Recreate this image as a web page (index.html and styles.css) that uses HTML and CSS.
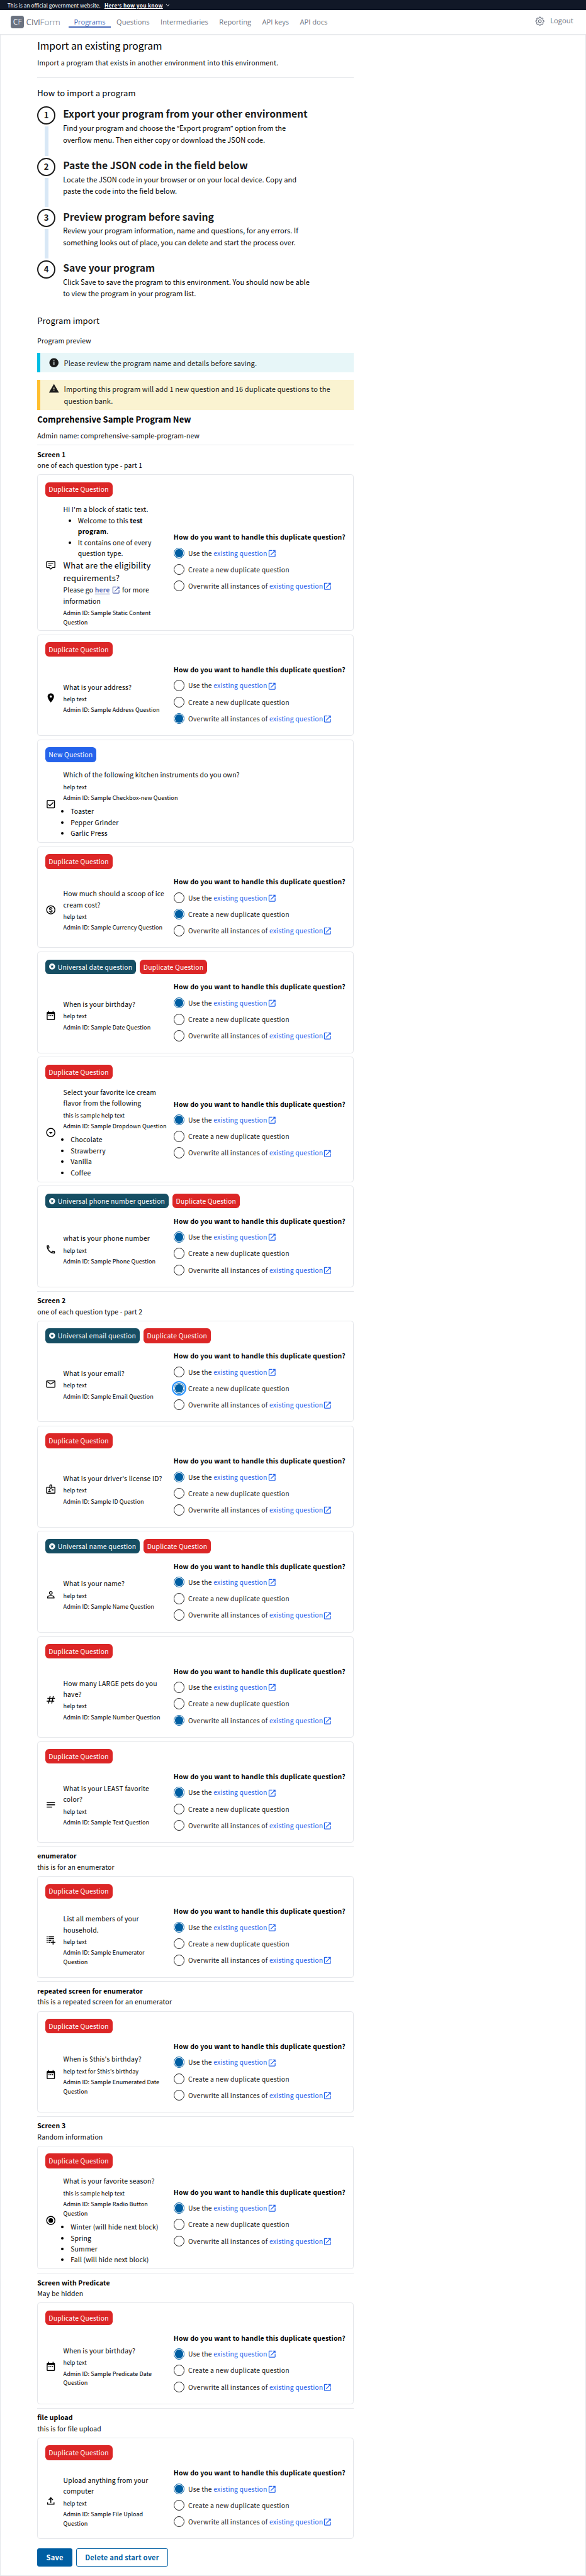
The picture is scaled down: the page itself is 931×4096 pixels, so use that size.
FILE: index.html
```html
<!DOCTYPE html>
<html lang="en">
<head>
<meta charset="utf-8">
<title>Import an existing program</title>
<link rel="stylesheet" href="styles.css">
</head>
<body>
<svg class="defs" aria-hidden="true">
  <symbol id="i-open" viewBox="0 0 24 24"><path d="M19 19H5V5h7V3H5c-1.11 0-2 .9-2 2v14c0 1.1.89 2 2 2h14c1.1 0 2-.9 2-2v-7h-2v7zM14 3v2h3.59l-9.83 9.83 1.41 1.41L19 6.41V10h2V3h-7z"/></symbol>
  <symbol id="i-static" viewBox="0 0 24 24"><path d="M4 4h16a1 1 0 0 1 1 1v11a1 1 0 0 1-1 1h-4.500L12 20.300 8.500 17H4a1 1 0 0 1-1-1V5a1 1 0 0 1 1-1z" fill="none" stroke="currentColor" stroke-width="2"/><path d="M6.200 8.200h11M6.200 12.200h7" fill="none" stroke="currentColor" stroke-width="1.600"/></symbol>
  <symbol id="i-address" viewBox="0 0 24 24"><path d="M12 2C8.130 2 5 5.130 5 9c0 5.250 7 13 7 13s7-7.750 7-13c0-3.870-3.130-7-7-7zm0 9.500c-1.380 0-2.500-1.120-2.500-2.500s1.120-2.500 2.500-2.500 2.500 1.120 2.500 2.500-1.120 2.500-2.500 2.500z"/></symbol>
  <symbol id="i-checkbox" viewBox="0 0 24 24"><path d="M19 3H5c-1.100 0-2 .9-2 2v14c0 1.100.9 2 2 2h14c1.100 0 2-.9 2-2V5c0-1.100-.9-2-2-2zm0 16H5V5h14v14zM17.990 9l-1.410-1.420-6.590 6.590-2.580-2.570-1.420 1.410 4 3.990z"/></symbol>
  <symbol id="i-currency" viewBox="0 0 24 24"><circle cx="12" cy="12" r="9" fill="none" stroke="currentColor" stroke-width="2"/><path d="M15 9.200C14.600 8.200 13.500 7.500 12 7.500c-1.700 0-2.900.8-2.900 2.100 0 3 5.900 1.600 5.900 4.700 0 1.300-1.200 2.200-3 2.200-1.700 0-2.900-.8-3.200-2.100M12 5.500v2M12 16.500v2" fill="none" stroke="currentColor" stroke-width="1.900"/></symbol>
  <symbol id="i-date" viewBox="0 0 24 24"><path d="M9 11H7v2h2v-2zm4 0h-2v2h2v-2zm4 0h-2v2h2v-2zm2-7h-1V2h-2v2H8V2H6v2H5c-1.110 0-1.990.9-1.990 2L3 20c0 1.100.89 2 2 2h14c1.100 0 2-.9 2-2V6c0-1.100-.9-2-2-2zm0 16H5V9h14v11z"/></symbol>
  <symbol id="i-dropdown" viewBox="0 0 24 24"><path d="M12 4c4.410 0 8 3.590 8 8s-3.590 8-8 8-8-3.590-8-8 3.590-8 8-8m0-2C6.480 2 2 6.480 2 12s4.480 10 10 10 10-4.480 10-10S17.520 2 12 2zm0 13l-4-4h8z"/></symbol>
  <symbol id="i-phone" viewBox="0 0 24 24"><path d="M6.540 5c.06.89.21 1.760.45 2.590l-1.200 1.200c-.41-1.200-.67-2.470-.76-3.790h1.510m9.860 12.020c.85.24 1.720.39 2.600.45v1.490c-1.320-.09-2.590-.35-3.800-.75l1.200-1.190M7.500 3H4c-.55 0-1 .45-1 1 0 9.390 7.610 17 17 17 .55 0 1-.45 1-1v-3.490c0-.55-.45-1-1-1-1.240 0-2.450-.2-3.570-.57-.1-.04-.21-.05-.31-.05-.26 0-.51.1-.71.29l-2.200 2.200c-2.830-1.450-5.150-3.760-6.590-6.590l2.200-2.200c.28-.28.36-.67.25-1.020C8.700 6.450 8.500 5.250 8.500 4c0-.55-.45-1-1-1z"/></symbol>
  <symbol id="i-email" viewBox="0 0 24 24"><path d="M22 6c0-1.100-.9-2-2-2H4c-1.100 0-2 .9-2 2v12c0 1.100.9 2 2 2h16c1.100 0 2-.9 2-2V6zm-2 0l-8 5-8-5h16zm0 12H4V8l8 5 8-5v10z"/></symbol>
  <symbol id="i-id" viewBox="0 0 24 24"><path d="M20 7h-5V4c0-1.100-.9-2-2-2h-2c-1.100 0-2 .9-2 2v3H4c-1.100 0-2 .9-2 2v11c0 1.100.9 2 2 2h16c1.100 0 2-.9 2-2V9c0-1.100-.9-2-2-2zm-9-3h2v5h-2V4zm9 16H4V9h5c0 1.100.9 2 2 2h2c1.100 0 2-.9 2-2h5v11z"/><circle cx="9" cy="13.500" r="1.500"/><path d="M11.080 16.180C10.440 15.900 9.740 15.750 9 15.750s-1.440.15-2.080.43C6.360 16.420 6 16.960 6 17.570V18h6v-.43c0-.61-.36-1.150-.92-1.390zM14 12h4v1.500h-4zM14 15h4v1.500h-4z"/></symbol>
  <symbol id="i-name" viewBox="0 0 24 24"><path d="M12 5.900c1.160 0 2.100.94 2.100 2.100s-.94 2.100-2.100 2.100S9.900 9.160 9.900 8s.94-2.100 2.100-2.100m0 9c2.970 0 6.100 1.460 6.100 2.100v1.100H5.900V17c0-.64 3.130-2.100 6.100-2.100M12 4C9.790 4 8 5.790 8 8s1.790 4 4 4 4-1.790 4-4-1.790-4-4-4zm0 9c-2.670 0-8 1.340-8 4v3h16v-3c0-2.660-5.330-4-8-4z"/></symbol>
  <symbol id="i-number" viewBox="0 0 24 24"><path d="M10.500 4L7 20M17.500 4L14 20M4.500 9H21M3 15h16.500" fill="none" stroke="currentColor" stroke-width="2"/></symbol>
  <symbol id="i-text" viewBox="0 0 24 24"><path d="M3 6h18v2H3zM3 11h18v2H3zM3 16h12v2H3z"/></symbol>
  <symbol id="i-enum" viewBox="0 0 24 24"><path d="M3 4h2v2H3zM7 4h12v2H7zM3 8h2v2H3zM7 8h12v2H7zM3 12h2v2H3zM7 12h6v2H7zM3 16h2v2H3zM7 16h4v2H7zM16 12h2v4h4v2h-4v4h-2v-4h-4v-2h4z"/></symbol>
  <symbol id="i-radio" viewBox="0 0 24 24"><circle cx="12" cy="12" r="9" fill="none" stroke="currentColor" stroke-width="2"/><circle cx="12" cy="12" r="5"/></symbol>
  <symbol id="i-upload" viewBox="0 0 24 24"><path d="M5 15v4h14v-4M12 16V5.500M7.500 9.500L12 5l4.500 4.500" fill="none" stroke="currentColor" stroke-width="2"/></symbol>
  <symbol id="i-star" viewBox="0 0 24 24"><path fill-rule="evenodd" d="M12 2a10 10 0 1 0 0 20 10 10 0 0 0 0-20zm3.700 15L12 14.300 8.300 17l1.400-4.400L6 10h4.500L12 5.500l1.500 4.500H18l-3.700 2.600z"/></symbol>
  <symbol id="i-info" viewBox="0 0 24 24"><path d="M12 2C6.480 2 2 6.480 2 12s4.480 10 10 10 10-4.480 10-10S17.520 2 12 2zm1 15h-2v-6h2v6zm0-8h-2V7h2v2z"/></symbol>
  <symbol id="i-warn" viewBox="0 0 24 24"><path d="M1 21h22L12 2 1 21zm12-3h-2v-2h2v2zm0-4h-2v-4h2v4z"/></symbol>
  <symbol id="i-gear" viewBox="0 0 24 24"><path d="M10.300 4.300c.4-1.760 2.900-1.760 3.400 0a1.720 1.720 0 0 0 2.570 1.070c1.540-.94 3.300.82 2.370 2.370a1.720 1.720 0 0 0 1.060 2.570c1.760.43 1.760 2.930 0 3.360a1.720 1.720 0 0 0-1.060 2.570c.94 1.540-.83 3.300-2.370 2.370a1.720 1.720 0 0 0-2.570 1.060c-.43 1.760-2.930 1.760-3.360 0a1.720 1.720 0 0 0-2.570-1.060c-1.540.94-3.300-.83-2.370-2.370a1.720 1.720 0 0 0-1.060-2.570c-1.760-.43-1.760-2.930 0-3.360a1.720 1.720 0 0 0 1.060-2.570c-.94-1.540.83-3.300 2.370-2.370 1 .6 2.300.07 2.570-1.060z" fill="none" stroke="currentColor" stroke-width="1.600"/><circle cx="12" cy="12" r="3" fill="none" stroke="currentColor" stroke-width="1.600"/></symbol>
  <symbol id="i-chev" viewBox="0 0 12 12"><path d="M2.500 4l3.500 3.500L9.500 4" fill="none" stroke="currentColor" stroke-width="1.300"/></symbol>
</svg>

<div class="gov"><span class="gov-text">This is an official government website.</span><a class="gov-link">Here's how you know</a><svg class="chev"><use href="#i-chev"/></svg></div>

<header class="header">
  <div class="logo"><span class="mark">C<i>F</i></span><span class="word">Civi<i>Form</i></span></div>
  <nav class="nav">
    <a class="nav-item active">Programs</a><a class="nav-item">Questions</a><a class="nav-item">Intermediaries</a><a class="nav-item">Reporting</a><a class="nav-item">API keys</a><a class="nav-item">API docs</a>
  </nav>
  <div class="account"><svg class="gear"><use href="#i-gear"/></svg><span>Logout</span></div>
</header>

<main class="main">
  <div class="column">
    <h1 class="title">Import an existing program</h1>
    <p class="lead">Import a program that exists in another environment into this environment.</p>
    <hr class="rule">
    <h2 class="sub">How to import a program</h2>

    <ol class="steps">
      <li class="step"><div class="rail"><span class="num">1</span><span class="bar"></span></div><div class="step-body"><h3>Export your program from your other environment</h3><p>Find your program and choose the <span class="quote">“</span>Export program<span class="quote">”</span> option from the<br>overflow menu. Then either copy or download the JSON code.</p></div></li>
      <li class="step"><div class="rail"><span class="num">2</span><span class="bar"></span></div><div class="step-body"><h3>Paste the JSON code in the field below</h3><p>Locate the JSON code in your browser or on your local device. Copy and<br>paste the code into the field below.</p></div></li>
      <li class="step"><div class="rail"><span class="num">3</span><span class="bar"></span></div><div class="step-body"><h3>Preview program before saving</h3><p>Review your program information, name and questions, for any errors. If<br>something looks out of place, you can delete and start the process over.</p></div></li>
      <li class="step"><div class="rail"><span class="num">4</span></div><div class="step-body"><h3>Save your program</h3><p>Click Save to save the program to this environment. You should now be able<br>to view the program in your program list.</p></div></li>
    </ol>

    <h2 class="sub import">Program import</h2>
    <p class="preview">Program preview</p>

    <div class="alert info"><svg class="alert-icon"><use href="#i-info"/></svg><p>Please review the program name and details before saving.</p></div>
    <div class="alert warning"><svg class="alert-icon"><use href="#i-warn"/></svg><p>Importing this program will add 1 new question and 16 duplicate questions to the<br>question bank.</p></div>

    <h3 class="program">Comprehensive Sample Program New</h3>
    <p class="admin-name">Admin name: comprehensive-sample-program-new</p>

    <section class="block">
      <h4>Screen 1</h4><p class="desc">one of each question type - part 1</p>

      <article class="card">
        <div class="badges"><span class="badge dup">Duplicate Question</span></div>
        <div class="row"><svg class="icon"><use href="#i-static"/></svg>
          <div class="q"><p>Hi I'm a block of static text.</p><ul class="inner"><li>Welcome to this <b>test<br>program</b>.</li><li>It contains one of every<br>question type.</li></ul><p class="big">What are the eligibility<br>requirements?</p><p>Please go <a class="here">here</a> <svg class="open here-icon"><use href="#i-open"/></svg> for more<br>information</p><p class="small">Admin ID: Sample Static Content<br>Question</p></div>
          <div class="choices"><p class="ask">How do you want to handle this duplicate question?</p><div class="opt"><span class="radio on"></span><span>Use the <a>existing question</a></span><svg class="open"><use href="#i-open"/></svg></div><div class="opt"><span class="radio"></span><span>Create a new duplicate question</span></div><div class="opt"><span class="radio"></span><span>Overwrite all instances of <a>existing question</a></span><svg class="open"><use href="#i-open"/></svg></div></div>
        </div>
      </article>

      <article class="card">
        <div class="badges"><span class="badge dup">Duplicate Question</span></div>
        <div class="row"><svg class="icon"><use href="#i-address"/></svg>
          <div class="q"><p>What is your address?</p><p class="small">help text</p><p class="small">Admin ID: Sample Address Question</p></div>
          <div class="choices"><p class="ask">How do you want to handle this duplicate question?</p><div class="opt"><span class="radio"></span><span>Use the <a>existing question</a></span><svg class="open"><use href="#i-open"/></svg></div><div class="opt"><span class="radio"></span><span>Create a new duplicate question</span></div><div class="opt"><span class="radio on"></span><span>Overwrite all instances of <a>existing question</a></span><svg class="open"><use href="#i-open"/></svg></div></div>
        </div>
      </article>

      <article class="card">
        <div class="badges"><span class="badge new">New Question</span></div>
        <div class="row"><svg class="icon"><use href="#i-checkbox"/></svg>
          <div class="q"><p>Which of the following kitchen instruments do you own?</p><p class="small">help text</p><p class="small">Admin ID: Sample Checkbox-new Question</p><ul class="options"><li>Toaster</li><li>Pepper Grinder</li><li>Garlic Press</li></ul></div>
        </div>
      </article>

      <article class="card">
        <div class="badges"><span class="badge dup">Duplicate Question</span></div>
        <div class="row"><svg class="icon"><use href="#i-currency"/></svg>
          <div class="q"><p>How much should a scoop of ice<br>cream cost?</p><p class="small">help text</p><p class="small">Admin ID: Sample Currency Question</p></div>
          <div class="choices"><p class="ask">How do you want to handle this duplicate question?</p><div class="opt"><span class="radio"></span><span>Use the <a>existing question</a></span><svg class="open"><use href="#i-open"/></svg></div><div class="opt"><span class="radio on"></span><span>Create a new duplicate question</span></div><div class="opt"><span class="radio"></span><span>Overwrite all instances of <a>existing question</a></span><svg class="open"><use href="#i-open"/></svg></div></div>
        </div>
      </article>

      <article class="card">
        <div class="badges"><span class="badge uni"><svg class="star"><use href="#i-star"/></svg>Universal date question</span><span class="badge dup">Duplicate Question</span></div>
        <div class="row"><svg class="icon"><use href="#i-date"/></svg>
          <div class="q"><p>When is your birthday?</p><p class="small">help text</p><p class="small">Admin ID: Sample Date Question</p></div>
          <div class="choices"><p class="ask">How do you want to handle this duplicate question?</p><div class="opt"><span class="radio on"></span><span>Use the <a>existing question</a></span><svg class="open"><use href="#i-open"/></svg></div><div class="opt"><span class="radio"></span><span>Create a new duplicate question</span></div><div class="opt"><span class="radio"></span><span>Overwrite all instances of <a>existing question</a></span><svg class="open"><use href="#i-open"/></svg></div></div>
        </div>
      </article>

      <article class="card">
        <div class="badges"><span class="badge dup">Duplicate Question</span></div>
        <div class="row"><svg class="icon"><use href="#i-dropdown"/></svg>
          <div class="q"><p>Select your favorite ice cream<br>flavor from the following</p><p class="small">this is sample help text</p><p class="small">Admin ID: Sample Dropdown Question</p><ul class="options"><li>Chocolate</li><li>Strawberry</li><li>Vanilla</li><li>Coffee</li></ul></div>
          <div class="choices"><p class="ask">How do you want to handle this duplicate question?</p><div class="opt"><span class="radio on"></span><span>Use the <a>existing question</a></span><svg class="open"><use href="#i-open"/></svg></div><div class="opt"><span class="radio"></span><span>Create a new duplicate question</span></div><div class="opt"><span class="radio"></span><span>Overwrite all instances of <a>existing question</a></span><svg class="open"><use href="#i-open"/></svg></div></div>
        </div>
      </article>

      <article class="card">
        <div class="badges"><span class="badge uni"><svg class="star"><use href="#i-star"/></svg>Universal phone number question</span><span class="badge dup">Duplicate Question</span></div>
        <div class="row"><svg class="icon"><use href="#i-phone"/></svg>
          <div class="q"><p>what is your phone number</p><p class="small">help text</p><p class="small">Admin ID: Sample Phone Question</p></div>
          <div class="choices"><p class="ask">How do you want to handle this duplicate question?</p><div class="opt"><span class="radio on"></span><span>Use the <a>existing question</a></span><svg class="open"><use href="#i-open"/></svg></div><div class="opt"><span class="radio"></span><span>Create a new duplicate question</span></div><div class="opt"><span class="radio"></span><span>Overwrite all instances of <a>existing question</a></span><svg class="open"><use href="#i-open"/></svg></div></div>
        </div>
      </article>
    </section>

    <section class="block">
      <h4>Screen 2</h4><p class="desc">one of each question type - part 2</p>

      <article class="card">
        <div class="badges"><span class="badge uni"><svg class="star"><use href="#i-star"/></svg>Universal email question</span><span class="badge dup">Duplicate Question</span></div>
        <div class="row"><svg class="icon"><use href="#i-email"/></svg>
          <div class="q"><p>What is your email?</p><p class="small">help text</p><p class="small">Admin ID: Sample Email Question</p></div>
          <div class="choices"><p class="ask">How do you want to handle this duplicate question?</p><div class="opt"><span class="radio"></span><span>Use the <a>existing question</a></span><svg class="open"><use href="#i-open"/></svg></div><div class="opt"><span class="radio on focus"></span><span>Create a new duplicate question</span></div><div class="opt"><span class="radio"></span><span>Overwrite all instances of <a>existing question</a></span><svg class="open"><use href="#i-open"/></svg></div></div>
        </div>
      </article>

      <article class="card">
        <div class="badges"><span class="badge dup">Duplicate Question</span></div>
        <div class="row"><svg class="icon"><use href="#i-id"/></svg>
          <div class="q"><p>What is your driver's license ID?</p><p class="small">help text</p><p class="small">Admin ID: Sample ID Question</p></div>
          <div class="choices"><p class="ask">How do you want to handle this duplicate question?</p><div class="opt"><span class="radio on"></span><span>Use the <a>existing question</a></span><svg class="open"><use href="#i-open"/></svg></div><div class="opt"><span class="radio"></span><span>Create a new duplicate question</span></div><div class="opt"><span class="radio"></span><span>Overwrite all instances of <a>existing question</a></span><svg class="open"><use href="#i-open"/></svg></div></div>
        </div>
      </article>

      <article class="card">
        <div class="badges"><span class="badge uni"><svg class="star"><use href="#i-star"/></svg>Universal name question</span><span class="badge dup">Duplicate Question</span></div>
        <div class="row"><svg class="icon"><use href="#i-name"/></svg>
          <div class="q"><p>What is your name?</p><p class="small">help text</p><p class="small">Admin ID: Sample Name Question</p></div>
          <div class="choices"><p class="ask">How do you want to handle this duplicate question?</p><div class="opt"><span class="radio on"></span><span>Use the <a>existing question</a></span><svg class="open"><use href="#i-open"/></svg></div><div class="opt"><span class="radio"></span><span>Create a new duplicate question</span></div><div class="opt"><span class="radio"></span><span>Overwrite all instances of <a>existing question</a></span><svg class="open"><use href="#i-open"/></svg></div></div>
        </div>
      </article>

      <article class="card">
        <div class="badges"><span class="badge dup">Duplicate Question</span></div>
        <div class="row"><svg class="icon"><use href="#i-number"/></svg>
          <div class="q"><p>How many LARGE pets do you<br>have?</p><p class="small">help text</p><p class="small">Admin ID: Sample Number Question</p></div>
          <div class="choices"><p class="ask">How do you want to handle this duplicate question?</p><div class="opt"><span class="radio"></span><span>Use the <a>existing question</a></span><svg class="open"><use href="#i-open"/></svg></div><div class="opt"><span class="radio"></span><span>Create a new duplicate question</span></div><div class="opt"><span class="radio on"></span><span>Overwrite all instances of <a>existing question</a></span><svg class="open"><use href="#i-open"/></svg></div></div>
        </div>
      </article>

      <article class="card">
        <div class="badges"><span class="badge dup">Duplicate Question</span></div>
        <div class="row"><svg class="icon"><use href="#i-text"/></svg>
          <div class="q"><p>What is your LEAST favorite<br>color?</p><p class="small">help text</p><p class="small">Admin ID: Sample Text Question</p></div>
          <div class="choices"><p class="ask">How do you want to handle this duplicate question?</p><div class="opt"><span class="radio on"></span><span>Use the <a>existing question</a></span><svg class="open"><use href="#i-open"/></svg></div><div class="opt"><span class="radio"></span><span>Create a new duplicate question</span></div><div class="opt"><span class="radio"></span><span>Overwrite all instances of <a>existing question</a></span><svg class="open"><use href="#i-open"/></svg></div></div>
        </div>
      </article>
    </section>

    <section class="block">
      <h4>enumerator</h4><p class="desc">this is for an enumerator</p>

      <article class="card">
        <div class="badges"><span class="badge dup">Duplicate Question</span></div>
        <div class="row"><svg class="icon"><use href="#i-enum"/></svg>
          <div class="q"><p>List all members of your<br>household.</p><p class="small">help text</p><p class="small">Admin ID: Sample Enumerator<br>Question</p></div>
          <div class="choices"><p class="ask">How do you want to handle this duplicate question?</p><div class="opt"><span class="radio on"></span><span>Use the <a>existing question</a></span><svg class="open"><use href="#i-open"/></svg></div><div class="opt"><span class="radio"></span><span>Create a new duplicate question</span></div><div class="opt"><span class="radio"></span><span>Overwrite all instances of <a>existing question</a></span><svg class="open"><use href="#i-open"/></svg></div></div>
        </div>
      </article>
    </section>

    <section class="block">
      <h4>repeated screen for enumerator</h4><p class="desc">this is a repeated screen for an enumerator</p>

      <article class="card">
        <div class="badges"><span class="badge dup">Duplicate Question</span></div>
        <div class="row"><svg class="icon"><use href="#i-date"/></svg>
          <div class="q"><p>When is $this's birthday?</p><p class="small">help text for $this's birthday</p><p class="small">Admin ID: Sample Enumerated Date<br>Question</p></div>
          <div class="choices"><p class="ask">How do you want to handle this duplicate question?</p><div class="opt"><span class="radio on"></span><span>Use the <a>existing question</a></span><svg class="open"><use href="#i-open"/></svg></div><div class="opt"><span class="radio"></span><span>Create a new duplicate question</span></div><div class="opt"><span class="radio"></span><span>Overwrite all instances of <a>existing question</a></span><svg class="open"><use href="#i-open"/></svg></div></div>
        </div>
      </article>
    </section>

    <section class="block">
      <h4>Screen 3</h4><p class="desc">Random information</p>

      <article class="card">
        <div class="badges"><span class="badge dup">Duplicate Question</span></div>
        <div class="row"><svg class="icon"><use href="#i-radio"/></svg>
          <div class="q"><p>What is your favorite season?</p><p class="small">this is sample help text</p><p class="small">Admin ID: Sample Radio Button<br>Question</p><ul class="options"><li>Winter (will hide next block)</li><li>Spring</li><li>Summer</li><li>Fall (will hide next block)</li></ul></div>
          <div class="choices"><p class="ask">How do you want to handle this duplicate question?</p><div class="opt"><span class="radio on"></span><span>Use the <a>existing question</a></span><svg class="open"><use href="#i-open"/></svg></div><div class="opt"><span class="radio"></span><span>Create a new duplicate question</span></div><div class="opt"><span class="radio"></span><span>Overwrite all instances of <a>existing question</a></span><svg class="open"><use href="#i-open"/></svg></div></div>
        </div>
      </article>
    </section>

    <section class="block">
      <h4>Screen with Predicate</h4><p class="desc">May be hidden</p>

      <article class="card">
        <div class="badges"><span class="badge dup">Duplicate Question</span></div>
        <div class="row"><svg class="icon"><use href="#i-date"/></svg>
          <div class="q"><p>When is your birthday?</p><p class="small">help text</p><p class="small">Admin ID: Sample Predicate Date<br>Question</p></div>
          <div class="choices"><p class="ask">How do you want to handle this duplicate question?</p><div class="opt"><span class="radio on"></span><span>Use the <a>existing question</a></span><svg class="open"><use href="#i-open"/></svg></div><div class="opt"><span class="radio"></span><span>Create a new duplicate question</span></div><div class="opt"><span class="radio"></span><span>Overwrite all instances of <a>existing question</a></span><svg class="open"><use href="#i-open"/></svg></div></div>
        </div>
      </article>
    </section>

    <section class="block">
      <h4>file upload</h4><p class="desc">this is for file upload</p>

      <article class="card">
        <div class="badges"><span class="badge dup">Duplicate Question</span></div>
        <div class="row"><svg class="icon"><use href="#i-upload"/></svg>
          <div class="q"><p>Upload anything from your<br>computer</p><p class="small">help text</p><p class="small">Admin ID: Sample File Upload<br>Question</p></div>
          <div class="choices"><p class="ask">How do you want to handle this duplicate question?</p><div class="opt"><span class="radio on"></span><span>Use the <a>existing question</a></span><svg class="open"><use href="#i-open"/></svg></div><div class="opt"><span class="radio"></span><span>Create a new duplicate question</span></div><div class="opt"><span class="radio"></span><span>Overwrite all instances of <a>existing question</a></span><svg class="open"><use href="#i-open"/></svg></div></div>
        </div>
      </article>
    </section>

    <div class="actions"><button class="btn primary">Save</button><button class="btn outline">Delete and start over</button></div>
  </div>
</main>
</body>
</html>
```

FILE: styles.css
```css
/* 1rem is ten design pixels */
html { font-size: 7.271px; }
*, *::before, *::after { box-sizing: border-box; }
body, h1, h2, h3, h4, p, ul, ol { margin: 0; padding: 0; }
body {
  font-family: "Noto Sans CJK SC", "Noto Sans", sans-serif;
  font-size: 1.433rem;
  line-height: 2.4rem;
  letter-spacing: .024rem;
  color: #000;
  background: #fff;
  white-space: nowrap;
}
svg { fill: currentColor; flex: none; display: block; }
.defs { position: absolute; width: 0; height: 0; }
.quote { font-family: "Noto Sans", sans-serif; line-height: 1; }

.gov { display: flex; align-items: center; height: 2.2rem; padding-left: 1.6rem; background: #111827; color: #fff; font-size: 1.14rem; line-height: 2.2rem; letter-spacing: .005rem; }
.gov-link { margin-left: .85rem; font-weight: 700; letter-spacing: .045rem; text-decoration: underline; text-underline-offset: .2rem; }
.chev { width: 1.2rem; height: 1.2rem; margin-left: .4rem; }

.header { display: flex; height: 5.2rem; padding: 1.2rem 2.8rem 0 2.4rem; color: #6b7280; box-shadow: 0 1px 2px rgba(0, 0, 0, .15); font-family: "Open Sans", "Noto Sans", sans-serif; letter-spacing: 0; }
.logo { display: flex; align-items: center; height: 2.8rem; }
.logo i { font-style: normal; font-weight: 300; }
.mark { width: 2.8rem; height: 2.8rem; border-radius: .5rem; background: #6b7280; color: #fff; text-align: center; font-size: 1.65rem; line-height: 2.7rem; }
.word { width: 7.5rem; margin-left: .5rem; font-size: 1.87rem; line-height: 2.8rem; color: #6b7280; }
.nav { display: flex; margin-left: 1.75rem; padding-top: .2rem; font-size: 1.53rem; line-height: 2.6rem; }
.nav-item { height: 2.5rem; padding: 0 1.2rem; }
.nav-item.active { color: #4668b8; font-weight: 500; border-bottom: 2px solid #4668b8; }
.account { display: flex; margin-left: auto; font-size: 1.55rem; line-height: 2.2rem; }
.gear { width: 2.4rem; height: 2.4rem; margin-right: 1.1rem; }

.main { border: 1px solid #e5e7eb; padding: 0 0 1.9rem 8rem; }
.column { width: 69.2rem; }
.title { padding-top: .9rem; font-size: 2.15rem; font-weight: 400; line-height: 3.2rem; letter-spacing: .003rem; }
.lead { margin-top: .9rem; letter-spacing: .035rem; }
.rule { height: 1px; margin: 2rem 0 0; border: 0; background: #e5e7eb; }
.sub { margin-top: 1.9rem; font-size: 1.79rem; font-weight: 400; line-height: 2.8rem; letter-spacing: .021rem; }

.steps { list-style: none; padding-top: 1.48rem; color: #1b1b1b; }
.step { display: flex; gap: 1.65rem; height: 11.22rem; }
.step:last-child { height: 9rem; }
.rail { display: flex; flex-direction: column; align-items: center; gap: .4rem; width: 4rem; padding-bottom: .4rem; }
.num { width: 4rem; height: 4rem; border: .4rem solid #1b1b1b; border-radius: 50%; text-align: center; font-size: 1.79rem; font-weight: 700; line-height: 3.2rem; }
.bar { flex: 1; width: .8rem; background: #d9e8f6; }
.step-body { padding-top: .47rem; }
.step-body h3 { font-size: 2.15rem; line-height: 2.5rem; letter-spacing: 0; }
.step-body p { padding-top: .51rem; font-size: 1.519rem; line-height: 2.52rem; letter-spacing: .008rem; color: #000; }

.import { margin-top: 2.86rem; }
.preview { margin-top: 1.68rem; }
.alert { display: flex; gap: 1rem; margin-top: 1.58rem; padding: .85rem 0 .85rem 1.75rem; border-left: .8rem solid #00bde3; background: #e7f6f8; color: #1b1b1b; font-size: 1.519rem; line-height: 2.5rem; letter-spacing: .012rem; }
.alert-icon { width: 2.4rem; height: 2.4rem; }
.warning { margin-top: 1.6rem; padding: .8rem 0 .8rem 1.75rem; border-color: #ffbe2e; background: #faf3d1; }
.program { margin-top: .77rem; font-size: 1.79rem; line-height: 2.8rem; letter-spacing: .013rem; }
.admin-name { margin-top: .9rem; }

.block { margin-top: .75rem; padding-top: calc(.9rem - 1px); border-top: 1px solid #e5e7eb; }
.block + .block { margin-top: .8rem; }
.block h4 { font-size: 1.433rem; line-height: 2.4rem; }
.card { margin-top: .8rem; padding: calc(1.7rem - 1px) calc(1.7rem - 1px) calc(.9rem - 1px); border: 1px solid #e5e7eb; border-radius: .6rem; }
.badges { display: flex; gap: .8rem; }
.badge { display: flex; align-items: center; height: 3.2rem; padding: 0 .8rem; border-radius: .8rem; color: #fff; }
.dup { background: #dc2626; }
.new { background: #2563eb; }
.uni { background: #164e63; }
.star { width: 1.6rem; height: 1.6rem; margin-right: .4rem; }

.row { display: flex; align-items: center; margin-top: 1.6rem; }
.icon { width: 2.4rem; height: 2.4rem; margin-right: 1.6rem; }
.q { flex: 1; min-width: 0; }
.small { margin-top: .4rem; font-size: 1.253rem; line-height: 2rem; letter-spacing: .005rem; }
.big { font-size: 1.79rem; line-height: 2.8rem; letter-spacing: .019rem; }
.options { margin-top: .8rem; padding-left: 1.6rem; }
.inner { padding-left: 3.2rem; }
.here { color: #5b6cb5; font-weight: 700; text-decoration: underline; text-underline-offset: .3rem; }
.open { width: 2rem; height: 2rem; color: #2563eb; }
.here-icon { display: inline-block; vertical-align: middle; margin: -.4rem 0 0; color: #5b6cb5; }

.choices { flex: none; width: 37.7rem; height: 14.8rem; color: #1b1b1b; }
.ask { margin-bottom: 1.1rem; color: #000; font-weight: 700; }
.opt { display: flex; height: 3.6rem; }
.opt a { color: #2563eb; }
.opt .open { margin-top: .3rem; }
.radio { flex: none; width: 2.4rem; height: 2.4rem; margin-right: .8rem; border: .2rem solid #1b1b1b; border-radius: 50%; }
.on { padding: .2rem; border-color: #005ea2; background: #005ea2 content-box; }
.focus { outline: .4rem solid #2491ff; outline-offset: .2rem; }

.actions { display: flex; gap: .8rem; margin-top: 2rem; }
.btn { height: 4rem; padding: 0 1.85rem; border: .2rem solid #005ea2; border-radius: .4rem; font: 700 1.519rem/1 "Noto Sans CJK SC", "Noto Sans", sans-serif; letter-spacing: .03rem; }
.primary { background: #005ea2; color: #fff; }
.outline { background: #fff; color: #005ea2; }
```
